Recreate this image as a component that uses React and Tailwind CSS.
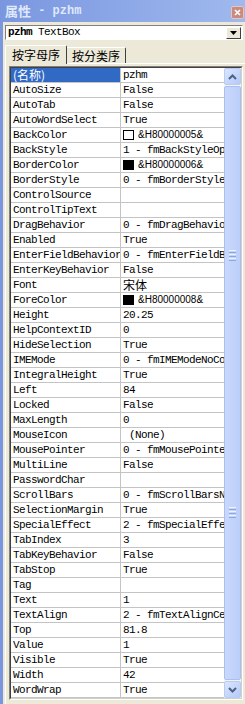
import React from "react";

const rows = [
  ["(名称)", "pzhm"],
  ["AutoSize", "False"],
  ["AutoTab", "False"],
  ["AutoWordSelect", "True"],
  ["BackColor", { swatch: "white", text: "&H80000005&" }],
  ["BackStyle", "1 - fmBackStyleOpaque"],
  ["BorderColor", { swatch: "black", text: "&H80000006&" }],
  ["BorderStyle", "0 - fmBorderStyleNone"],
  ["ControlSource", ""],
  ["ControlTipText", ""],
  ["DragBehavior", "0 - fmDragBehaviorDisabled"],
  ["Enabled", "True"],
  ["EnterFieldBehavior", "0 - fmEnterFieldBehaviorSelectAll"],
  ["EnterKeyBehavior", "False"],
  ["Font", { cjk: "宋体" }],
  ["ForeColor", { swatch: "black", text: "&H80000008&" }],
  ["Height", "20.25"],
  ["HelpContextID", "0"],
  ["HideSelection", "True"],
  ["IMEMode", "0 - fmIMEModeNoControl"],
  ["IntegralHeight", "True"],
  ["Left", "84"],
  ["Locked", "False"],
  ["MaxLength", "0"],
  ["MouseIcon", " (None)"],
  ["MousePointer", "0 - fmMousePointerDefault"],
  ["MultiLine", "False"],
  ["PasswordChar", ""],
  ["ScrollBars", "0 - fmScrollBarsNone"],
  ["SelectionMargin", "True"],
  ["SpecialEffect", "2 - fmSpecialEffectSunken"],
  ["TabIndex", "3"],
  ["TabKeyBehavior", "False"],
  ["TabStop", "True"],
  ["Tag", ""],
  ["Text", "1"],
  ["TextAlign", "2 - fmTextAlignCenter"],
  ["Top", "81.8"],
  ["Value", "1"],
  ["Visible", "True"],
  ["Width", "42"],
  ["WordWrap", "True"],
];

const mono = "font-['Liberation_Mono',monospace] text-[11px] tracking-[-0.6px]";
const cjk = "font-['Noto_Sans_CJK_SC','Noto_Sans',sans-serif] text-[12px]";

function Value({ v }) {
  if (typeof v === "string") {
    return <span className={`${mono} leading-[14px] whitespace-pre`}>{v}</span>;
  }
  if (v.cjk) {
    return <span className={`${cjk} leading-[14px]`}>{v.cjk}</span>;
  }
  return (
    <span className="flex items-center h-[14px]">
      <span
        className={`w-[11px] h-[10px] border border-black mr-[4px] ${
          v.swatch === "white" ? "bg-white" : "bg-black"
        }`}
      />
      <span className="font-['Liberation_Sans',sans-serif] text-[10px] leading-[14px]">
        {v.text}
      </span>
    </span>
  );
}

function Chevron({ up }) {
  return (
    <svg width="9" height="6" viewBox="0 0 9 6">
      <path
        d={up ? "M1 5 L4.5 1.5 L8 5" : "M1 1 L4.5 4.5 L8 1"}
        stroke="#4d6185"
        strokeWidth="2"
        fill="none"
      />
    </svg>
  );
}

function Grip() {
  return (
    <div className="flex flex-col gap-[1px] items-center">
      <div className="w-[7px] h-[1px] bg-[#eef4fe]" />
      <div className="w-[7px] h-[1px] bg-[#8ca8e4]" />
      <div className="w-[7px] h-[1px] bg-[#eef4fe]" />
      <div className="w-[7px] h-[1px] bg-[#8ca8e4]" />
      <div className="w-[7px] h-[1px] bg-[#eef4fe]" />
      <div className="w-[7px] h-[1px] bg-[#8ca8e4]" />
    </div>
  );
}

export default function App() {
  return (
    <div className="w-[245px] h-[704px] overflow-hidden bg-[#ece9d8] flex flex-col text-black">
      {/* Title bar */}
      <div className="h-[22px] flex items-center bg-gradient-to-r from-[#7a96df] to-[#a0b9ee] pl-[5px] pr-[1px] shrink-0">
        <div className="flex items-center text-[#dfe8fa] font-bold">
          <span className="font-['Noto_Sans_CJK_SC',sans-serif] text-[13px] leading-[20px]">属性</span>
          <span className="font-['Liberation_Mono',monospace] text-[12px] leading-[20px] whitespace-pre"> - pzhm</span>
        </div>
        <div className="ml-auto w-[13px] h-[13px] mt-[3px] rounded-[2px] bg-[#c98a80] border border-[#e6c6c0] flex items-center justify-center">
          <svg width="7" height="7" viewBox="0 0 7 7">
            <path d="M1 1 L6 6 M6 1 L1 6" stroke="#ffffff" strokeWidth="1.6" />
          </svg>
        </div>
      </div>

      <div className="flex flex-1 min-h-0">
        {/* left window frame */}
        <div className="w-[3px] bg-[#7a96df] shrink-0" />

        <div className="flex-1 flex flex-col pt-[3px] pl-[2px]">
          {/* combobox */}
          <div className="h-[15px] w-[238px] bg-white border-t border-l border-[#808080] border-r border-b border-r-white border-b-white flex items-center">
            <div className="flex-1 pl-[2px] flex items-center whitespace-pre">
              <span className="font-['Liberation_Mono',monospace] text-[11px] leading-[13px] tracking-[-0.6px] font-bold">pzhm</span>
              <span className={`${mono} leading-[13px]`}> TextBox</span>
            </div>
            <div className="w-[15px] h-[12px] mr-[1px] bg-[#ece9d8] border border-t-white border-l-white border-r-[#404040] border-b-[#404040] flex items-center justify-center">
              <svg width="7" height="4" viewBox="0 0 7 4">
                <path d="M0 0 H7 L3.5 4 Z" fill="#000" />
              </svg>
            </div>
          </div>

          {/* tabs */}
          <div className="mt-[5px] h-[18px] flex items-end">
            <div className="h-[19px] w-[62px] mb-[-1px] relative z-10 bg-[#ece9d8] border-t border-l border-white border-r border-r-[#404040] rounded-t-[2px] flex items-center justify-center">
              <span className={`${cjk} leading-[16px]`}>按字母序</span>
            </div>
            <div className="h-[16px] w-[59px] bg-[#ece9d8] border-t border-white border-r border-r-[#404040] rounded-tr-[2px] flex items-center justify-center">
              <span className={`${cjk} leading-[14px]`}>按分类序</span>
            </div>
          </div>

          {/* tab page */}
          <div className="flex-1 border-t border-l border-white pt-[2px] pl-[3px] pr-[2px]">
            {/* grid */}
            <div className="w-[234px] border-t border-l border-[#808080] border-r border-b border-r-white border-b-white">
              <div className="border-t border-l border-[#404040] border-r border-b border-r-[#d4d0c8] border-b-[#d4d0c8] flex bg-white">
                <div className="w-[213px] flex flex-col">
                  {rows.map(([name, v], i) => (
                    <div key={name} className="h-[15px] flex border-b border-[#c4c4c4]">
                      <div
                        className={`w-[110px] shrink-0 pl-[2px] border-r border-[#c4c4c4] overflow-hidden whitespace-nowrap flex items-center ${
                          i === 0 ? "bg-[#316ac5] text-white" : ""
                        }`}
                      >
                        {i === 0 ? (
                          <span className={`${cjk} leading-[14px]`}>{name}</span>
                        ) : (
                          <span className={`${mono} leading-[14px]`}>{name}</span>
                        )}
                      </div>
                      <div className="flex-1 pl-[2px] overflow-hidden whitespace-nowrap flex items-center">
                        {i === 0 ? (
                          <span className={`${mono} leading-[14px]`}>{v}</span>
                        ) : (
                          <Value v={v} />
                        )}
                      </div>
                    </div>
                  ))}
                </div>
                {/* scrollbar */}
                <div className="w-[17px] bg-[#f4f3ef] flex flex-col">
                  <div className="h-[17px] rounded-[2px] bg-gradient-to-br from-[#dbe6fe] to-[#b5c9f8] border border-[#b8cbf6] flex items-center justify-center">
                    <Chevron up />
                  </div>
                  <div className="flex-1 my-[1px] rounded-[2px] bg-gradient-to-r from-[#c9d8fc] to-[#bccffa] border border-[#a9bff2] flex flex-col items-center">
                    <div className="h-[163px]" />
                    <Grip />
                    <div className="h-[246px]" />
                    <Grip />
                  </div>
                  <div className="h-[17px] rounded-[2px] bg-gradient-to-br from-[#dbe6fe] to-[#b5c9f8] border border-[#b8cbf6] flex items-center justify-center">
                    <Chevron />
                  </div>
                </div>
              </div>
            </div>
          </div>
        </div>
      </div>
    </div>
  );
}
